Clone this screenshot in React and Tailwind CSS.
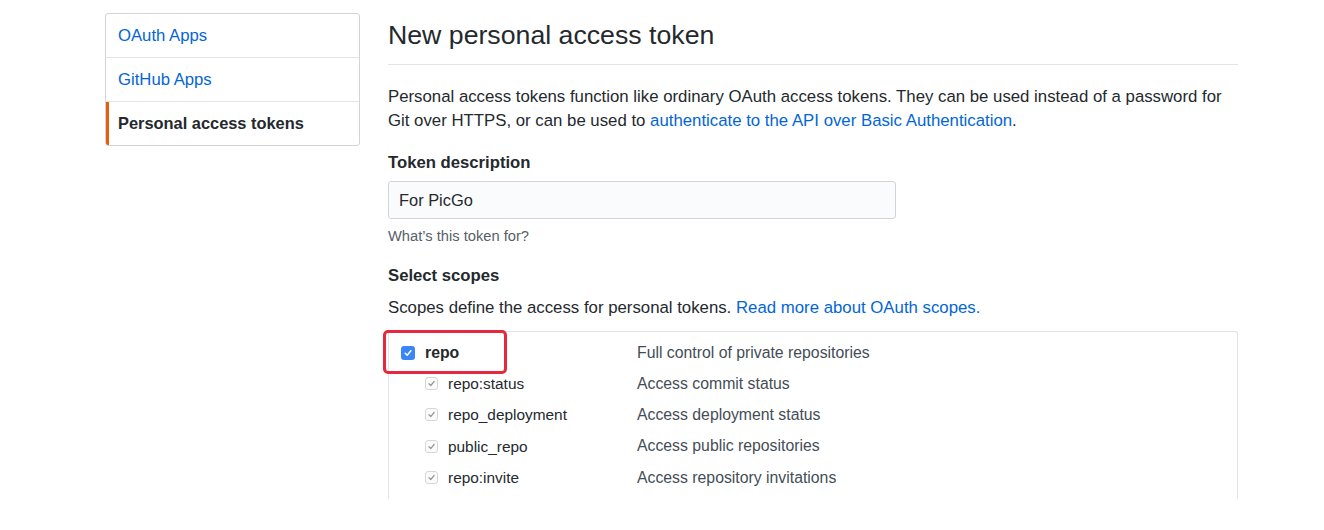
import React from "react";

function BlueCheck() {
  return (
    <span className="flex h-[14px] w-[14px] items-center justify-center rounded-[3px] bg-[#3b86f7]">
      <svg width="10" height="10" viewBox="0 0 10 10" fill="none">
        <path d="M2.2 5.2 L4.2 7.2 L7.9 2.8" stroke="#fff" strokeWidth="1.5" strokeLinecap="round" strokeLinejoin="round" />
      </svg>
    </span>
  );
}

function GreyCheck() {
  return (
    <span className="flex h-[13px] w-[13px] items-center justify-center rounded-[3px] border border-[#d6d6d6] bg-[#fbfbfb]">
      <svg width="9" height="9" viewBox="0 0 10 10" fill="none">
        <path d="M2.2 5.2 L4.2 7.2 L7.9 2.8" stroke="#9a9a9a" strokeWidth="1.4" strokeLinecap="round" strokeLinejoin="round" />
      </svg>
    </span>
  );
}

const subs = [
  ["repo:status", "Access commit status"],
  ["repo_deployment", "Access deployment status"],
  ["public_repo", "Access public repositories"],
  ["repo:invite", "Access repository invitations"],
];

export default function App() {
  return (
    <div
      className="flex h-[530px] items-start overflow-hidden bg-white pl-[105px] pt-[13px] text-[#24292e]"
      style={{ fontFamily: '"Liberation Sans", Arial, sans-serif' }}
    >
      <nav className="w-[255px] shrink-0 overflow-hidden rounded-[3px] border border-[#d1d5da] text-[16.7px]">
        <div className="flex h-[44px] items-center border-b border-[#e1e4e8] px-3 text-[#0366d6]">OAuth Apps</div>
        <div className="flex h-[44px] items-center border-b border-[#e1e4e8] px-3 text-[#0366d6]">GitHub Apps</div>
        <div className="relative flex h-[43px] items-center px-3 text-[16.4px] font-bold text-[#24292e]">
          <span className="absolute bottom-0 left-0 top-0 w-[3px] bg-[#e36209]" />
          Personal access tokens
        </div>
      </nav>

      <main className="ml-[28px] w-[850px] pt-[7px]">
        <h1 className="border-b border-[#e1e4e8] pb-[14px] text-[26.7px] font-normal leading-[30px]">
          New personal access token
        </h1>
        <p className="mt-[20px] text-[16.8px] leading-[24px]">
          Personal access tokens function like ordinary OAuth access tokens. They can be used instead of a password for
          Git over HTTPS, or can be used to{" "}
          <span className="text-[#0366d6]">authenticate to the API over Basic Authentication</span>.
        </p>

        <div className="mt-[18px] text-[16.7px] font-bold leading-[24px]">Token description</div>
        <div className="mt-[6px] flex h-[38px] w-[508px] items-center rounded-[3px] border border-[#d1d5da] bg-[#fafbfc] px-[10px] text-[16.4px]">
          For PicGo
        </div>
        <div className="mt-[8px] text-[14.7px] leading-[18px] text-[#586069]">What’s this token for?</div>

        <div className="mt-[19px] text-[16.7px] font-bold leading-[24px]">Select scopes</div>
        <p className="mt-[8px] text-[16.8px] leading-[24px]">
          Scopes define the access for personal tokens.{" "}
          <span className="text-[#0366d6]">Read more about OAuth scopes.</span>
        </p>

        <div className="relative mt-[11px] h-[168px] rounded-t-[3px] border-x border-t border-[#e1e4e8] pl-[12px] pt-[5px] text-[15.8px]">
          <div className="pointer-events-none absolute left-[-6px] top-[-2px] h-[44px] w-[124px] rounded-[5px] border-[3px] border-[#e6283f]" />
          <div className="grid h-[31px] grid-cols-[236px_1fr] items-center">
            <div className="flex items-center gap-[10px]">
              <BlueCheck />
              <span className="font-bold">repo</span>
            </div>
            <div className="text-[#444d56]">Full control of private repositories</div>
          </div>
          {subs.map(([name, desc]) => (
            <div key={name} className="grid h-[31.3px] grid-cols-[236px_1fr] items-center">
              <div className="flex items-center gap-[10px] pl-[24px]">
                <GreyCheck />
                <span className="text-[15.4px]">{name}</span>
              </div>
              <div className="text-[#444d56]">{desc}</div>
            </div>
          ))}
        </div>
      </main>
    </div>
  );
}
